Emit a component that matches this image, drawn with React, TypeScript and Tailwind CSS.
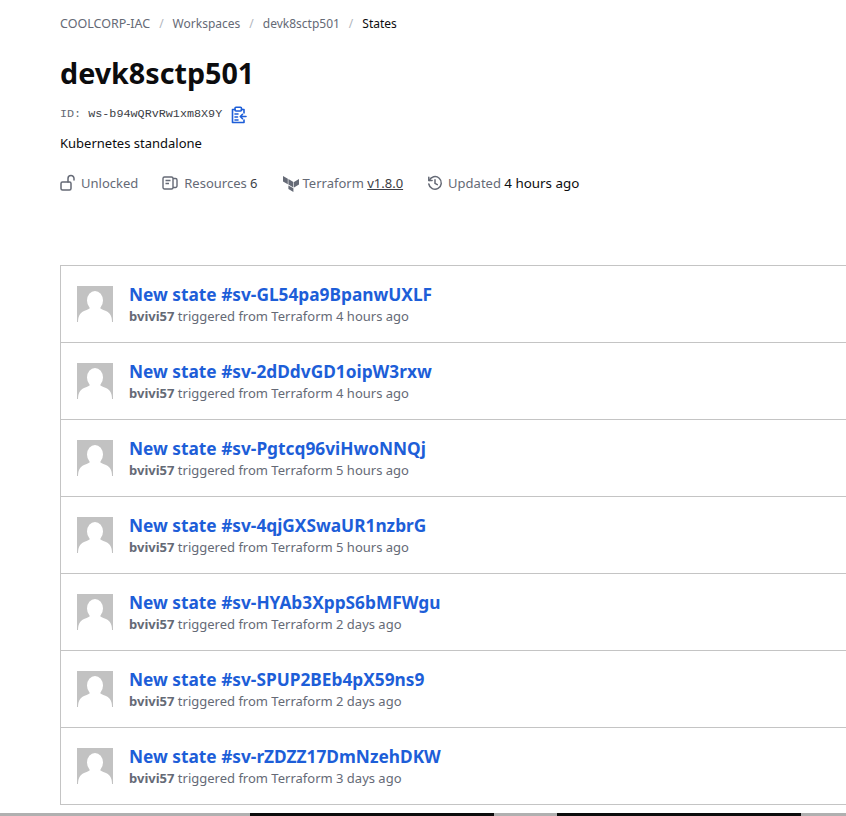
import React from "react";

const states = [
  { id: "sv-GL54pa9BpanwUXLF", time: "4 hours ago" },
  { id: "sv-2dDdvGD1oipW3rxw", time: "4 hours ago" },
  { id: "sv-Pgtcq96viHwoNNQj", time: "5 hours ago" },
  { id: "sv-4qjGXSwaUR1nzbrG", time: "5 hours ago" },
  { id: "sv-HYAb3XppS6bMFWgu", time: "2 days ago" },
  { id: "sv-SPUP2BEb4pX59ns9", time: "2 days ago" },
  { id: "sv-rZDZZ17DmNzehDKW", time: "3 days ago" },
];

function Avatar() {
  return (
    <svg width="36" height="36" viewBox="0 0 36 36" className="shrink-0">
      <rect width="36" height="36" fill="#c2c2c2" />
      <ellipse cx="18" cy="14.5" rx="8" ry="9.5" fill="#fff" />
      <path d="M1 36c0-6 2-9 6-11 4-1.500 6-2.500 7-4h8c1 1.500 3 2.500 7 4 4 2 6 5 6 11z" fill="#fff" />
    </svg>
  );
}

function LockIcon() {
  return (
    <svg width="18" height="18" viewBox="0 0 18 18" fill="none" stroke="#656a76" strokeWidth="1.5">
      <rect x="1" y="8" width="10" height="8" rx="1.5" />
      <path d="M8 8V4.500a3 3 0 0 1 6 0V6" strokeLinecap="round" />
    </svg>
  );
}

function ResourcesIcon() {
  return (
    <svg width="16" height="16" viewBox="0 0 16 16" fill="none" stroke="#656a76" strokeWidth="1.4">
      <rect x="1" y="2" width="10" height="12" rx="1.500" />
      <path d="M3.500 5.500h5M3.500 8.500h3.500" />
      <path d="M11 3.500h2.500a1.500 1.500 0 0 1 1.500 1.500v6a1.500 1.500 0 0 1-1.500 1.500H11" />
    </svg>
  );
}

function TerraformIcon() {
  return (
    <svg width="16" height="17" viewBox="0 0 16 17" fill="#656a76">
      <path d="M0 1l4.800 2.800v5.400L0 6.400zM5.400 4.100l5 2.900v5.400l-5-2.900zM5.400 10.400l5 2.900V17l-5-2.900zM11 7l5-2.900v5.400L11 12.400z" />
    </svg>
  );
}

function HistoryIcon() {
  return (
    <svg width="16" height="16" viewBox="0 0 16 16" fill="none" stroke="#656a76" strokeWidth="1.5" strokeLinecap="round" strokeLinejoin="round">
      <path d="M2.200 5.500A6.300 6.300 0 1 1 1.800 9" />
      <path d="M1.800 2.200v3.300h3.300" />
      <path d="M8 4.800v3.600l2.300 1.200" />
    </svg>
  );
}

function CopyIcon() {
  return (
    <svg width="16" height="18" viewBox="0 0 16 18" fill="none" stroke="#1d5ed8" strokeWidth="1.600" strokeLinecap="round" strokeLinejoin="round">
      <path d="M13 7V3.500h-2.500M4 3.500H1.500V16.500H13V14" />
      <rect x="4" y="1.200" width="6.500" height="3.800" rx="1" />
      <path d="M4 8h3M4 11h2.500M4 14h3" />
      <path d="M15 10.500H9.500M11.500 8.300l-2.200 2.200 2.200 2.200" />
    </svg>
  );
}

export default function App() {
  return (
    <div className="min-h-[816px] relative overflow-hidden bg-white font-['Noto_Sans',sans-serif] pl-[60px] pt-[15px] text-[#0c0c0e]">
      <nav className="flex items-center gap-[9px] text-[12px] leading-[18px] text-[#656a76]">
        <span className="text-[12.5px]">COOLCORP-IAC</span>
        <span className="text-[#b2b6bd]">/</span>
        <span>Workspaces</span>
        <span className="text-[#b2b6bd]">/</span>
        <span>devk8sctp501</span>
        <span className="text-[#b2b6bd]">/</span>
        <span className="text-[#0c0c0e]">States</span>
      </nav>
      <h1 className="mt-[21px] text-[28.7px] leading-[38px] font-bold">devk8sctp501</h1>
      <div className="mt-[12px] flex items-center gap-[9px] h-[22px]">
        <span className="font-['Liberation_Mono',monospace] text-[11.75px] text-[#656a76]">
          ID: <span className="text-[#3b3d45]">ws-b94wQRvRw1xm8X9Y</span>
        </span>
        <CopyIcon />
      </div>
      <p className="mt-[7px] text-[13px] leading-[20px]">Kubernetes standalone</p>
      <div className="mt-[20px] flex items-center text-[13px] leading-[20px] text-[#656a76]">
        <span className="flex items-center gap-[3px]"><LockIcon />Unlocked</span>
        <span className="ml-[24px] flex items-center gap-[6px]"><ResourcesIcon /><span>Resources <span className="text-[#3b3d45]">6</span></span></span>
        <span className="ml-[25px] flex items-center gap-[4px]"><TerraformIcon /><span>Terraform <span className="text-[#3b3d45] underline">v1.8.0</span></span></span>
        <span className="ml-[24px] flex items-center gap-[5px]"><HistoryIcon /><span>Updated <span className="text-[#0c0c0e] text-[13.4px]">4 hours ago</span></span></span>
      </div>
      <ul className="mt-[72px] w-[820px] border border-[#c4c4c4] bg-white">
        {states.map((s, i) => (
          <li key={s.id} className={`flex items-center gap-[16px] px-[16px] ${i > 0 ? "border-t border-[#c4c4c4] h-[77px]" : "h-[76px]"}`}>
            <Avatar />
            <div className="pt-[2px]">
              <div className="text-[17.3px] leading-[22px] font-bold text-[#1d5ed8]">New state #{s.id}</div>
              <div className="text-[13px] leading-[20px] text-[#656a76]">
                <span className="font-bold">bvivi57</span> triggered from Terraform {s.time}
              </div>
            </div>
          </li>
        ))}
      </ul>
      <div className="absolute left-0 right-0 bottom-0 h-[3px] bg-[#b0b0b0] flex">
        <div className="ml-[250px] w-[244px] bg-[#0c0c0c]" />
        <div className="ml-[63px] w-[244px] bg-[#0c0c0c]" />
      </div>
    </div>
  );
}
